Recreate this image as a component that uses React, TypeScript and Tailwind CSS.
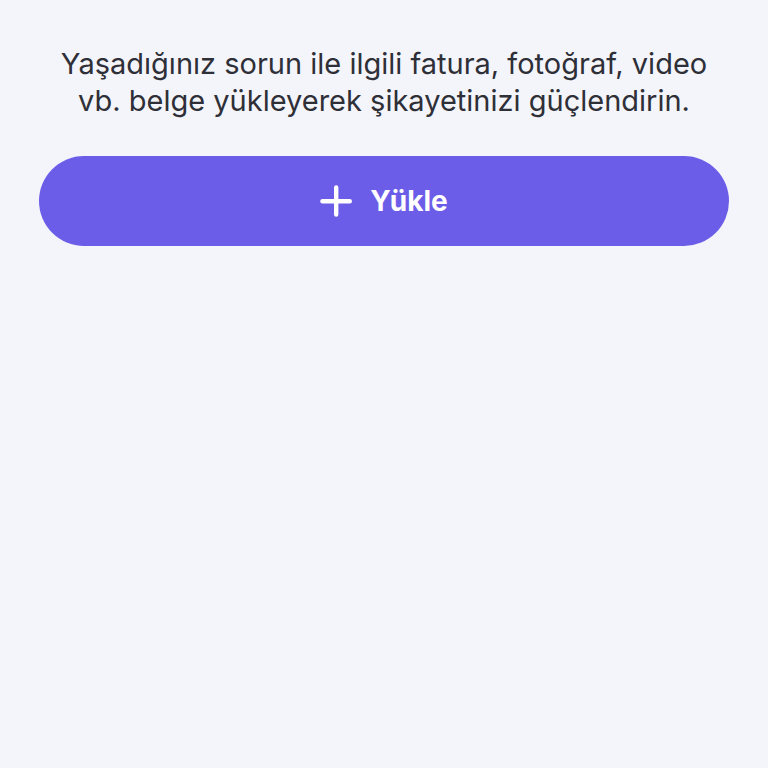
import type React from "react"

interface UploadButtonProps {
  label: string
  onClick?: () => void
}

const UploadButton: React.FC<UploadButtonProps> = ({ label, onClick }) => {
  return (
    <button
      type="button"
      onClick={onClick}
      className="flex h-[90px] w-full items-center justify-center gap-[18px] rounded-full bg-[#6c5de8] text-white"
    >
      <svg
        className="h-8 w-8"
        viewBox="0 0 32 32"
        fill="none"
        stroke="currentColor"
        strokeWidth="4.4"
        strokeLinecap="round"
        aria-hidden="true"
      >
        <path d="M16.2 2.4v27.2M2.4 16.2h27.4" />
      </svg>
      <span className="text-[28px] leading-8 font-bold">{label}</span>
    </button>
  )
}

const App: React.FC = () => {
  return (
    <main className="min-h-screen bg-[#f3f5fa] px-[39px] pt-[45px] font-['Inter','Open_Sans',sans-serif]">
      <p className="mb-[37px] px-4 text-center text-[29px] leading-[37px] text-[#2f2f38]">
        Yaşadığınız sorun ile ilgili fatura, fotoğraf, video vb. belge yükleyerek şikayetinizi güçlendirin.
      </p>
      <UploadButton label="Yükle" />
    </main>
  )
}

export default App
